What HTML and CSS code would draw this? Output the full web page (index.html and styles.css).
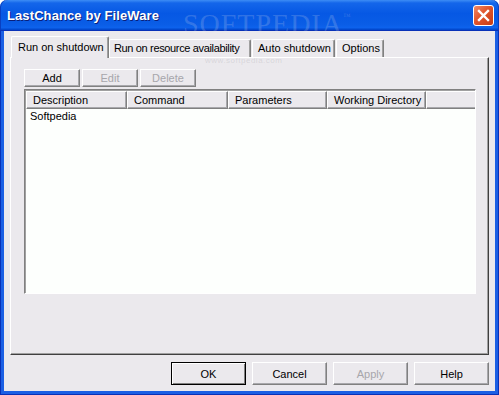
FILE: index.html
```html
<!DOCTYPE html>
<html lang="en">
<head>
  <meta charset="UTF-8">
  <title>LastChance by FileWare</title>
  <link rel="stylesheet" href="styles.css">
</head>
<body>
  <div class="window">
    <div class="titlebar">
      <span class="title">LastChance by FileWare</span>
      <button class="close" title="Close">
        <svg width="13" height="13" viewBox="0 0 13 13">
          <path d="M2 2 L11 11 M11 2 L2 11" stroke="#fff" stroke-width="2.4" stroke-linecap="square"/>
        </svg>
      </button>
    </div>

    <div class="client">
      <div class="tabs">
        <div class="tab active">Run on shutdown</div>
        <div class="tab t2">Run on resource availability</div>
        <div class="tab t3">Auto shutdown</div>
        <div class="tab t4">Options</div>
      </div>

      <div class="panel">
        <div class="toolbar">
          <button class="btn small">Add</button>
          <button class="btn small" disabled>Edit</button>
          <button class="btn small" disabled>Delete</button>
        </div>

        <div class="listview">
          <div class="lv-head">
            <div class="col c1">Description</div>
            <div class="col c2">Command</div>
            <div class="col c3">Parameters</div>
            <div class="col c4">Working Directory</div>
            <div class="col rest"></div>
          </div>
          <div class="lv-body">
            <div class="lv-row">Softpedia</div>
          </div>
        </div>
      </div>

      <div class="footer">
        <button class="btn big default">OK</button>
        <button class="btn big">Cancel</button>
        <button class="btn big" disabled>Apply</button>
        <button class="btn big">Help</button>
      </div>
    </div>

    <!-- watermark from the screenshot -->
    <div class="watermark">SOFTPEDIA<sup>™</sup></div>
    <div class="watermark-url">www.softpedia.com</div>
  </div>
</body>
</html>
```

FILE: styles.css
```css
* {
  box-sizing: border-box;
  margin: 0;
  padding: 0;
}

body {
  width: 499px;
  height: 395px;
  overflow: hidden;
  font-family: 'Liberation Sans', Arial, sans-serif;
  font-size: 11px;
  color: #000;
}

.window {
  position: relative;
  width: 499px;
  height: 395px;
  display: flex;
  flex-direction: column;
}

/* title bar */
.titlebar {
  height: 30px;
  display: flex;
  align-items: center;
  justify-content: space-between;
  padding: 0 5px 0 7px;
  border-radius: 7px 7px 0 0;
  background: linear-gradient(to bottom, #3d8df5 0%, #1466ea 10%, #0658e4 45%, #0a5de6 80%, #0d62ec 92%, #0042c6 100%);
  box-shadow: inset 1px 0 #0a3fc0, inset -1px 0 #0a3fc0;
}

.title {
  color: #fff;
  font-weight: bold;
  font-size: 13px;
  letter-spacing: 0.1px;
  text-shadow: 1px 1px #0a1f7a;
  padding-top: 1px;
}

.close {
  width: 21px;
  height: 21px;
  margin-top: 1px;
  border: 1px solid #fff;
  border-radius: 3px;
  background: linear-gradient(135deg, #f08a68 0%, #e0552c 45%, #c83c14 100%);
  display: flex;
  align-items: center;
  justify-content: center;
}

/* client area */
.client {
  flex: 1;
  background: #ebe9ed;
  border: solid #1b5fe4;
  border-width: 0 4px 4px;
  padding: 6px;
  display: flex;
  flex-direction: column;
  outline: 1px solid #0831b8;
  outline-offset: -1px;
}

.tabs {
  height: 21px;
  display: flex;
  align-items: flex-end;
  padding-left: 1px;
}

.tab {
  height: 18px;
  line-height: 17px;
  padding-left: 5px;
  background: #ebe9ed;
  border: 1px solid;
  border-color: #fff #808080 transparent #fff;
  border-bottom: 0;
  border-radius: 2px 2px 0 0;
  box-shadow: inset -1px 0 #a0a0a0;
  white-space: nowrap;
  overflow: hidden;
}

.tab.active {
  height: 22px;
  width: 98px;
  line-height: 20px;
  padding-left: 6px;
  margin-bottom: -1px;
  position: relative;
  z-index: 1;
}

.tab.t2 { width: 142px; letter-spacing: -0.35px; padding-left: 4px; }
.tab.t3 { width: 83px; margin-left: 1px; }
.tab.t4 { width: 48px; margin-left: 1px; }

.panel {
  height: 298px;
  border: 1px solid;
  border-color: #fff #404040 #404040 #fff;
  box-shadow: inset -1px -1px #a0a0a0;
  padding: 11px 13px;
}

.toolbar {
  display: flex;
  gap: 2px;
  margin-bottom: 2px;
}

.btn {
  font-family: 'Liberation Sans', Arial, sans-serif;
  font-size: 11px;
  color: #000;
  background: #ebe9ed;
  border: 1px solid;
  border-color: #fff #808080 #808080 #fff;
  box-shadow: inset -1px -1px #a8a8ac;
}

.btn:disabled {
  color: #a7a6ab;
}

.btn.small {
  width: 56px;
  height: 18px;
  line-height: 14px;
}

.btn.big {
  width: 75px;
  height: 23px;
}

.btn.default {
  border-color: #000;
  box-shadow: inset 1px 1px #fff, inset -1px -1px #808080;
}

.listview {
  width: 452px;
  height: 205px;
  background: #fdfffd;
  border: 1px solid;
  border-color: #808080 #fff #fff #808080;
  box-shadow: inset 1px 1px #a0a0a0;
  display: flex;
  flex-direction: column;
}

.lv-head {
  display: flex;
  height: 18px;
  margin: 1px 0 0 1px;
}

.col {
  height: 18px;
  line-height: 17px;
  padding-left: 6px;
  background: #ebe9ed;
  border: 1px solid;
  border-color: #fff #808080 #808080 #fff;
  box-shadow: inset -1px -1px #a8a8ac;
  white-space: nowrap;
}

.col.c1 { width: 101px; }
.col.c2 { width: 101px; }
.col.c3 { width: 99px; }
.col.c4 { width: 99px; }
.col.rest { flex: 1; border-right: 0; box-shadow: inset 0 -1px #a8a8ac; }

.lv-row {
  height: 15px;
  line-height: 15px;
  padding-left: 5px;
}

.footer {
  margin-top: 7px;
  display: flex;
  justify-content: flex-end;
  gap: 6px;
}

/* faint watermark over the title */
.watermark {
  position: absolute;
  left: 183px;
  top: 8px;
  font-family: 'Liberation Serif', 'Times New Roman', serif;
  font-size: 28px;
  letter-spacing: 1px;
  color: rgba(225, 225, 235, 0.2);
  pointer-events: none;
}

.watermark sup {
  font-size: 8px;
  vertical-align: 14px;
}

.watermark-url {
  position: absolute;
  left: 205px;
  top: 57px;
  font-size: 8px;
  line-height: 8px;
  letter-spacing: 0.5px;
  color: rgba(150, 150, 160, 0.25);
  pointer-events: none;
}
```
